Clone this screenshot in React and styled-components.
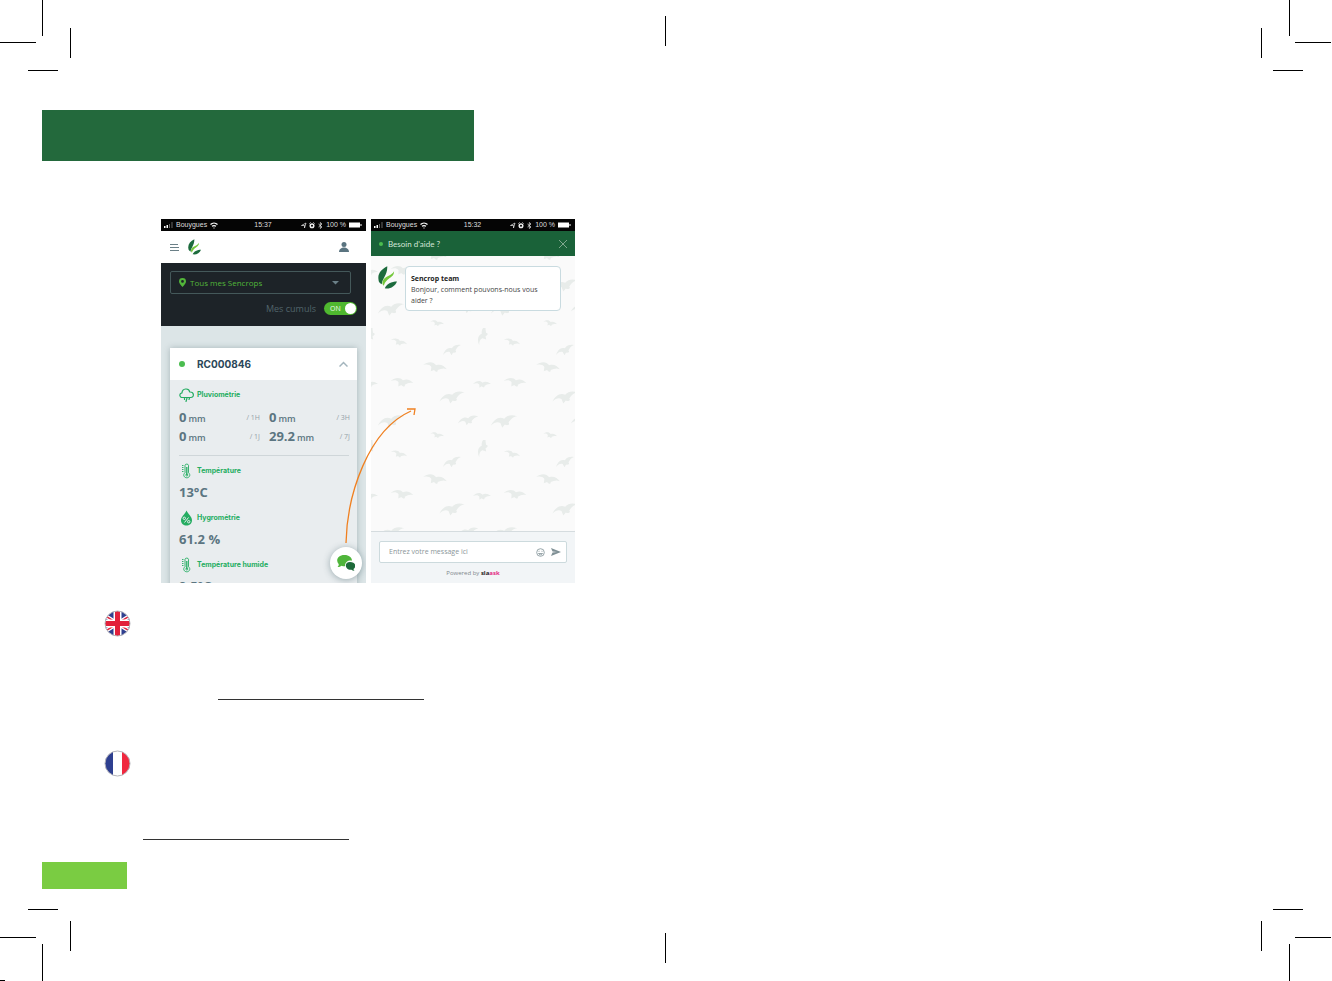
import React from 'react';
import styled, { createGlobalStyle } from 'styled-components';

const GlobalStyle = createGlobalStyle`
  * {
    box-sizing: border-box;
  }
  body {
    margin: 0;
    background: #fff;
    font-family: 'Open Sans', sans-serif;
  }
  h1, h2, h3, p, dl, dd, dt {
    margin: 0;
    font-weight: 400;
  }
  svg {
    display: block;
    flex: none;
  }
`;

const Sheet = styled.div`
  min-height: 100vh;
  display: flex;
  flex-direction: column;
`;

const Marks = styled.div`
  display: flex;
  justify-content: space-between;
  height: 72px;
`;

const Spread = styled.main`
  flex: 1;
  display: grid;
  grid-template-columns: 1fr 1fr;
`;

const Page = styled.section`
  display: flex;
  flex-direction: column;
  align-items: flex-start;
  padding: 38px 42px 20px;
`;

const Banner = styled.header`
  width: 432px;
  max-width: 100%;
  height: 51px;
  background: #23693c;
`;

const Figure = styled.div`
  position: relative;
  display: flex;
  gap: 5px;
  margin: 58px 0 27px 119px;
`;

const Language = styled.div`
  display: flex;
  align-items: flex-start;
  height: 90px;
  margin: 0 0 50px 62px;
`;

const Rule = styled.div`
  align-self: flex-end;
  width: 206px;
  height: 1px;
  margin-left: ${(props) => props.$indent}px;
  background: #333;
`;

const Folio = styled.footer`
  width: 85px;
  height: 27px;
  margin-top: -28px;
  background: #7acc42;
`;

const Arrow = styled.svg`
  position: absolute;
  left: 180px;
  top: 184px;
`;

const Phone = styled.div`
  position: relative;
  display: flex;
  flex-direction: column;
  width: ${(props) => props.$width}px;
  height: 364px;
  overflow: hidden;
  background: ${(props) => props.$bg};
`;

const Status = styled.div`
  flex: none;
  display: grid;
  grid-template-columns: 1fr auto 1fr;
  align-items: center;
  height: 12px;
  padding: 0 4px 0 3px;
  background: #050505;
  color: #ddd;
  font: 7px/12px 'Liberation Sans', sans-serif;
`;

const StatusGroup = styled.div`
  display: flex;
  align-items: center;
  justify-content: ${(props) => (props.$end ? 'flex-end' : 'flex-start')};
  gap: 3px;
  white-space: nowrap;
`;

const AppBar = styled.div`
  flex: none;
  display: flex;
  align-items: center;
  height: 32px;
  padding: 0 17px 0 9px;
  gap: 8px;
  background: #fff;
`;

const IconButton = styled.button`
  display: flex;
  padding: 0;
  border: 0;
  background: none;
  margin-left: ${(props) => (props.$push ? 'auto' : '0')};
`;

const Filter = styled.div`
  flex: none;
  height: 63px;
  padding: 8px 9px;
  background: #1d2328;
`;

const SelectBox = styled.label`
  display: flex;
  align-items: center;
  width: 181px;
  height: 23px;
  padding: 0 11px 0 8px;
  border: 1px solid #44585a;
  border-radius: 2px;
`;

const Select = styled.select`
  flex: 1;
  appearance: none;
  border: 0;
  padding: 0 0 0 4px;
  background: none;
  color: #52b53a;
  font: 8px/12px 'Open Sans', sans-serif;
`;

const SumRow = styled.label`
  display: flex;
  align-items: center;
  justify-content: flex-end;
  gap: 8px;
  margin-top: 8px;
  color: #51636b;
  font-size: 9px;
  line-height: 13px;
`;

const Toggle = styled.span`
  position: relative;
  display: flex;
  align-items: center;
  width: 33px;
  height: 13px;
  padding-left: 6px;
  border-radius: 7px;
  background: #4fb82f;
  color: #eefaea;
  font-size: 7px;
`;

const Check = styled.input`
  position: absolute;
  inset: 0;
  width: 100%;
  height: 100%;
  margin: 0;
  opacity: 0;
`;

const Knob = styled.span`
  width: 11px;
  height: 11px;
  margin: 0 1px 0 auto;
  border-radius: 50%;
  background: #fff;
`;

const Card = styled.div`
  flex: none;
  margin: 22px 9px 0;
  background: #e9edef;
  box-shadow: 0 0 6px rgba(70, 95, 100, 0.35);
`;

const CardHead = styled.div`
  display: flex;
  align-items: center;
  height: 32px;
  padding: 0 9px;
  background: #fff;
`;

const Dot = styled.span`
  width: ${(props) => props.$size}px;
  height: ${(props) => props.$size}px;
  border-radius: 50%;
  background: #4bbd50;
`;

const Station = styled.h2`
  flex: 1;
  margin-left: 12px;
  color: #2b4759;
  font: 700 10px/14px 'Inter', sans-serif;
`;

const CardBody = styled.div`
  padding: 7px 8px 0 9px;
`;

const SensorName = styled.h3`
  display: flex;
  align-items: center;
  gap: 3px;
  height: 16px;
  color: #25ad62;
  font: 700 7px/16px 'Inter', sans-serif;
`;

const Rain = styled.dl`
  display: grid;
  grid-template-columns: 81px 81px;
  column-gap: 9px;
  padding: 5px 0 9px;
  border-bottom: 1px solid #cfd6d9;
  margin-bottom: 7px;
`;

const RainCell = styled.div`
  display: flex;
  flex-direction: row-reverse;
  justify-content: space-between;
  align-items: center;
  height: 19px;
`;

const Period = styled.dt`
  color: #93a2a8;
  font-size: 7px;
`;

const Amount = styled.dd`
  color: #5b7581;
  font-size: 13px;
  font-weight: 700;
  line-height: 19px;
`;

const Unit = styled.span`
  margin-left: 2px;
  font-size: 9px;
  font-weight: 600;
`;

const Reading = styled.p`
  height: 31px;
  padding-top: 4px;
  color: #5b7581;
  font-size: 13px;
  font-weight: 700;
  line-height: 19px;
`;

const ChatButton = styled.button`
  position: absolute;
  right: 4px;
  bottom: 4px;
  display: flex;
  align-items: center;
  justify-content: center;
  width: 32px;
  height: 32px;
  padding: 0;
  border: 0;
  border-radius: 50%;
  background: #fff;
  box-shadow: 0 1px 7px rgba(60, 90, 100, 0.45);
`;

const ChatBar = styled.div`
  flex: none;
  display: flex;
  align-items: center;
  gap: 5px;
  height: 25px;
  padding: 0 8px;
  background: #1a6239;
  color: #d3e6d8;
  font: 8px/12px 'Lato', sans-serif;
`;

const Thread = styled.div`
  position: relative;
  flex: 1;
  display: flex;
  align-items: flex-start;
  gap: 8px;
  padding: 10px 14px 0 7px;
  background: #fafafa;
`;

const Birds = styled.svg`
  position: absolute;
  inset: 0;
`;

const Bubble = styled.div`
  position: relative;
  flex: 1;
  min-height: 45px;
  padding: 6px 5px 4px;
  border: 1px solid #c9dbe0;
  border-radius: 4px;
  background: #fff;
  color: #444;
  font: 7px/11px 'Open Sans', sans-serif;
`;

const Sender = styled.h3`
  color: #222;
  font-size: 7px;
  font-weight: 700;
`;

const Composer = styled.div`
  flex: none;
  height: 52px;
  padding: 9px 8px 0;
  border-top: 1px solid #d5dcdf;
  background: #f2f5f7;
`;

const MessageBox = styled.div`
  display: flex;
  align-items: center;
  gap: 6px;
  height: 22px;
  padding: 0 5px 0 9px;
  border: 1px solid #ccdadd;
  border-radius: 2px;
  background: #fff;
`;

const MessageInput = styled.input`
  flex: 1;
  min-width: 0;
  padding: 0;
  border: 0;
  background: none;
  font: 7px/12px 'Open Sans', sans-serif;
  &::placeholder {
    color: #8a9599;
    opacity: 1;
  }
`;

const Powered = styled.p`
  margin-top: 5px;
  color: #7f888d;
  text-align: center;
  font: 6px/10px 'Open Sans', sans-serif;
`;

const Brand = styled.a`
  color: #222;
  font-weight: 700;
  text-decoration: none;
`;

const BrandEnd = styled.span`
  color: #e32a83;
`;

const Line = ({ d, width = 72 }) => (
  <svg width={width} height="72" fill="none" stroke="#000">
    <path d={d} />
  </svg>
);

// the small logo sits over the bird pattern in the chat
const LogoMark = styled.svg`
  position: relative;
`;

const Logo = ({ width }) => (
  <LogoMark width={width} viewBox="0 0 39 46" height={Math.round(width * 1.2)}>
    <path fill="#1c6b3d" d="M19 0C7 6-1 15 1 27c0 5 3 8 7 10C7 28 20 17 19 0z" />
    <path fill="#75c83c" d="M33 10C33 20 26 22 19 28c-4 4-6 7-7 12-4-3-4-9 0-14 6-7 16-7 21-16z" />
    <path fill="#1c6b3d" d="M39 31c-4 10-14 16-25 14 3-9 14-14 25-14z" />
  </LogoMark>
);

const Rainy = () => (
  <svg width="15" height="16" viewBox="0 0 15 16" fill="none" stroke="#25ad62" strokeWidth="1.2" strokeLinecap="round">
    <path d="M4 10.5C.2 10.8-.2 6.4 3 5.8 3.3 1.2 9.8.6 10.8 5c4.6-.2 4.6 5.4 1 5.5H4z" />
    <path d="M5.5 11v1.5M8 11l-1 3.5M10.5 11l-.5 1.5" />
  </svg>
);

const Thermometer = () => (
  <svg width="15" height="16" viewBox="0 0 15 16" fill="none" stroke="#25ad62" strokeWidth=".9">
    <path d="M6 9.8V2.300c0-1.600 3.500-1.600 3.500 0v7.500c2.600 2 .9 5-1.700 5s-4.400-3-1.800-5z" />
    <path strokeWidth="1.300" d="M7.800 4v8" />
    <path d="M3 2.500h1.500M3 4.500h1.500M3 6.500h1.500M3 8.500h1.500" />
    <circle cx="7.800" cy="12" r="1" />
  </svg>
);

const Drop = () => (
  <svg width="15" height="16" viewBox="0 0 15 16">
    <path fill="#25ad62" d="M7.500.5c2 4 5.500 6.200 5.500 9.800 0 7-11 7-11 0C2 6.700 5.700 4.500 7.500.5z" />
    <g fill="none" stroke="#e9edef">
      <circle cx="5.300" cy="8.300" r="1.200" />
      <circle cx="9.700" cy="11.700" r="1.200" />
      <path d="M9.500 7.500l-4 5" />
    </g>
  </svg>
);

const StatusBar = ({ time }) => (
  <Status>
    <StatusGroup>
      <svg width="9" height="6">
        <path fill="#fff" d="M0 4h1.500v2H0zM2.500 3H4v3H2.500z" />
        <path fill="#666" d="M5 2h1v4H5zM7.500 0h1v6h-1z" />
      </svg>
      Bouygues
      <svg width="8" height="7" viewBox="0 0 8 7" fill="none" stroke="#fff" strokeWidth="1.200">
        <path d="M.5 2.500c2-2 5-2 7 0M2 4.300c1.300-1 2.700-1 4 0M3.500 6h1" />
      </svg>
    </StatusGroup>
    <span>{time}</span>
    <StatusGroup $end>
      <svg width="22" height="7" viewBox="0 0 22 7" fill="none" stroke="#eee">
        <path d="M.5 3.500L5 1 3.500 6V3.500z" strokeWidth=".7" />
        <circle cx="11" cy="3.800" r="1.800" strokeWidth="1.500" />
        <path d="M8.500 1.500l1-1M13.500 1.500l-1-1" />
        <path d="M17.500 2l3.500 3-1.700 1.500v-6L21 2l-3.500 3" strokeWidth=".7" />
      </svg>
      100 %
      <svg width="13" height="6">
        <path fill="#fff" d="M0 .5h11v5H0zM11.500 2h1v2h-1z" />
      </svg>
    </StatusGroup>
  </Status>
);

const rain = [
  ['0', '/ 1H'],
  ['0', '/ 3H'],
  ['0', '/ 1J'],
  ['29.2', '/ 7J'],
];

const sensors = [
  ['Température', '13°C', Thermometer],
  ['Hygrométrie', '61.2 %', Drop],
  ['Température humide', '9.5°C', Thermometer],
];

// x, y, rotation and scale of each bird in one pattern tile
const birds = [
  [28, 14, 40, 0.7],
  [81, 22, -5, 0.85],
  [64, 39, 35, 1],
  [31, 54, 30, 0.95],
  [111, 56, 25, 0.75],
  [-2, 56, 25, 0.75],
  [81, 69, 5, 1.1],
  [20, 93, 5, 1.15],
  [97, 92, 5, 0.9],
  [66, 107, 35, 0.6],
  [112, 7, -45, 0.9],
  [-1, 7, -45, 0.9],
];

const App = () => {
  return (
    <Sheet>
      <GlobalStyle />
      <Marks>
        <Line d="M42.500 0v36M0 42.500h36M70.500 28v30M28 70.500h30" />
        <Line width={2} d="M.5 16v30" />
        <Line d="M29.500 0v36M35 42.500h36M1.500 28v30M13 70.500h30" />
      </Marks>
      <Spread>
        <Page>
          <Banner />
          <Figure>
            <Phone $width={205} $bg="#dce5e7">
              <StatusBar time="15:37" />
              <AppBar>
                <IconButton aria-label="Menu">
                  <svg width="10" height="7" stroke="#6b8088">
                    <path d="M0 .5h8M0 3.500h9M0 6.500h9" />
                  </svg>
                </IconButton>
                <Logo width={13} />
                <IconButton $push aria-label="Compte">
                  <svg width="10" height="10" fill="#5a7480">
                    <circle cx="5" cy="2.500" r="2.500" />
                    <path d="M0 10c0-6 10-6 10 0z" />
                  </svg>
                </IconButton>
              </AppBar>
              <Filter>
                <SelectBox>
                  <svg width="7" height="9" viewBox="0 0 7 9">
                    <path fill="#52b53a" fillRule="evenodd" d="M3.500 9C1.500 6.500 0 5 0 3.400a3.500 3.400 0 017 0C7 5 5.500 6.500 3.500 9zm0-7a1.400 1.400 0 100 2.800 1.400 1.400 0 000-2.800z" />
                  </svg>
                  <Select aria-label="Sencrops">
                    <option>Tous mes Sencrops</option>
                  </Select>
                  <svg width="7" height="4">
                    <path fill="#6b8088" d="M0 0h7L3.500 3.500z" />
                  </svg>
                </SelectBox>
                <SumRow>
                  Mes cumuls
                  <Toggle>
                    <Check type="checkbox" defaultChecked />
                    ON
                    <Knob />
                  </Toggle>
                </SumRow>
              </Filter>
              <Card>
                <CardHead>
                  <Dot $size={6} />
                  <Station>RC000846</Station>
                  <IconButton aria-label="Replier">
                    <svg width="9" height="6" fill="none" stroke="#a3b5bd" strokeWidth="1.500">
                      <path d="M.5 5.500l4-4 4 4" />
                    </svg>
                  </IconButton>
                </CardHead>
                <CardBody>
                  <SensorName>
                    <Rainy />
                    Pluviométrie
                  </SensorName>
                  <Rain>
                    {rain.map(([value, period]) => (
                      <RainCell key={period}>
                        <Period>{period}</Period>
                        <Amount>
                          {value}
                          <Unit>mm</Unit>
                        </Amount>
                      </RainCell>
                    ))}
                  </Rain>
                  {sensors.map(([name, value, Icon]) => (
                    <div key={name}>
                      <SensorName>
                        <Icon />
                        {name}
                      </SensorName>
                      <Reading>{value}</Reading>
                    </div>
                  ))}
                </CardBody>
              </Card>
              <ChatButton aria-label="Chat">
                <svg width="18" height="16" viewBox="0 0 18 16">
                  <path fill="#4fb53a" d="M7.500 0C12 0 15 2.500 15 5.700c-4-.5-7 1.500-7 5.600-1.500 0-2.500-.1-3.500-.5-1 .8-2.500 1.300-4 1.200C1.500 11 2 10 1.600 9-1.500 5.500.5 0 7.500 0z" />
                  <path fill="#1d6a3a" d="M13 7c6 0 6.500 5 3.500 7 0 .7.500 1.200 1 1.700-1.200.1-2.200-.3-3-.9C8 15.600 6.500 7 13 7z" />
                </svg>
              </ChatButton>
            </Phone>
            <Phone $width={204} $bg="#fafafa">
              <StatusBar time="15:32" />
              <ChatBar>
                <Dot $size={4} />
                Besoin d'aide ?
                <IconButton $push aria-label="Fermer">
                  <svg width="8" height="8" stroke="#7fa78d">
                    <path d="M0 0l8 8M8 0L0 8" />
                  </svg>
                </IconButton>
              </ChatBar>
              <Thread>
                <Birds width="100%" height="100%">
                  <defs>
                    <path id="bird" fill="#e8ecea" d="M-11 5C-9 0-5-4 0-2 3-6 7-6 11-5 7-4 6-2 4 1 6 3 3 4 1 3L-1 6-3 2C-6 1-8 2-11 5z" />
                    <pattern id="flock" y="72" width="113" height="112" patternUnits="userSpaceOnUse">
                      {birds.map(([x, y, turn, scale]) => (
                        <use key={`${x}-${y}`} href="#bird" transform={`translate(${x} ${y}) rotate(${turn}) scale(${scale})`} />
                      ))}
                    </pattern>
                  </defs>
                  <rect width="100%" height="100%" fill="url(#flock)" />
                </Birds>
                <Logo width={19} />
                <Bubble>
                  <Sender>Sencrop team</Sender>
                  <p>Bonjour, comment pouvons-nous vous aider ?</p>
                </Bubble>
              </Thread>
              <Composer>
                <MessageBox>
                  <MessageInput aria-label="Message" placeholder="Entrez votre message ici" />
                  <IconButton aria-label="Emoji">
                    <svg width="9" height="9" fill="none" stroke="#7f9095" strokeWidth=".8">
                      <circle cx="4.500" cy="4.500" r="3.800" />
                      <path d="M2.500 5.500c1 1.800 3 1.800 4 0zM3 2.800v1M6 2.800v1" />
                    </svg>
                  </IconButton>
                  <IconButton aria-label="Envoyer">
                    <svg width="10" height="8" fill="#7f9095">
                      <path d="M0 0l10 4-10 4 1.500-3.500L6 4 1.500 3.500z" />
                    </svg>
                  </IconButton>
                </MessageBox>
                <Powered>
                  Powered by{' '}
                  <Brand href="#slaask">
                    sla<BrandEnd>ask</BrandEnd>
                  </Brand>
                </Powered>
              </Composer>
            </Phone>
            <Arrow width="80" height="144" fill="none" stroke="#f08020" strokeWidth="1.300">
              <path d="M5 140C6 92 27 27 70 8M66 6h8l-1 6" />
            </Arrow>
          </Figure>
          <Language>
            <svg width="27" height="27" viewBox="0 0 27 27">
              <clipPath id="round">
                <circle cx="13.500" cy="13.500" r="12.500" />
              </clipPath>
              <g clipPath="url(#round)">
                <path fill="#2f3f8f" d="M0 0h27v27H0z" />
                <path stroke="#fff" strokeWidth="4" d="M-3 3l33 21M30 3L-3 24" />
                <path stroke="#e2203b" strokeWidth="1.500" d="M-3 3l33 21M30 3L-3 24" />
                <path stroke="#fff" strokeWidth="8" d="M13.500 0v27M0 13.500h27" />
                <path stroke="#e2203b" strokeWidth="5" d="M13.500 0v27M0 13.500h27" />
              </g>
              <circle cx="13.500" cy="13.500" r="12.500" fill="none" stroke="#b5b5bb" />
            </svg>
            <Rule $indent={87} />
          </Language>
          <Language>
            <svg width="27" height="27" viewBox="0 0 27 27">
              <g clipPath="url(#round)">
                <path fill="#2e3f90" d="M0 0h9v27H0z" />
                <path fill="#fff" d="M9 0h9v27H9z" />
                <path fill="#f0283f" d="M18 0h9v27h-9z" />
              </g>
              <circle cx="13.500" cy="13.500" r="12.500" fill="none" stroke="#b5b5bb" />
            </svg>
            <Rule $indent={12} />
          </Language>
          <Folio />
        </Page>
        <Page />
      </Spread>
      <Marks>
        <Line d="M28 .5h30M0 28.500h36M70.500 12v30M42.500 35v37M0 71.500h5" />
        <Line width={2} d="M.5 24v30" />
        <Line d="M13 .5h30M35 28.500h36M1.500 12v30M29.500 35v37" />
      </Marks>
    </Sheet>
  );
};

export default App;
